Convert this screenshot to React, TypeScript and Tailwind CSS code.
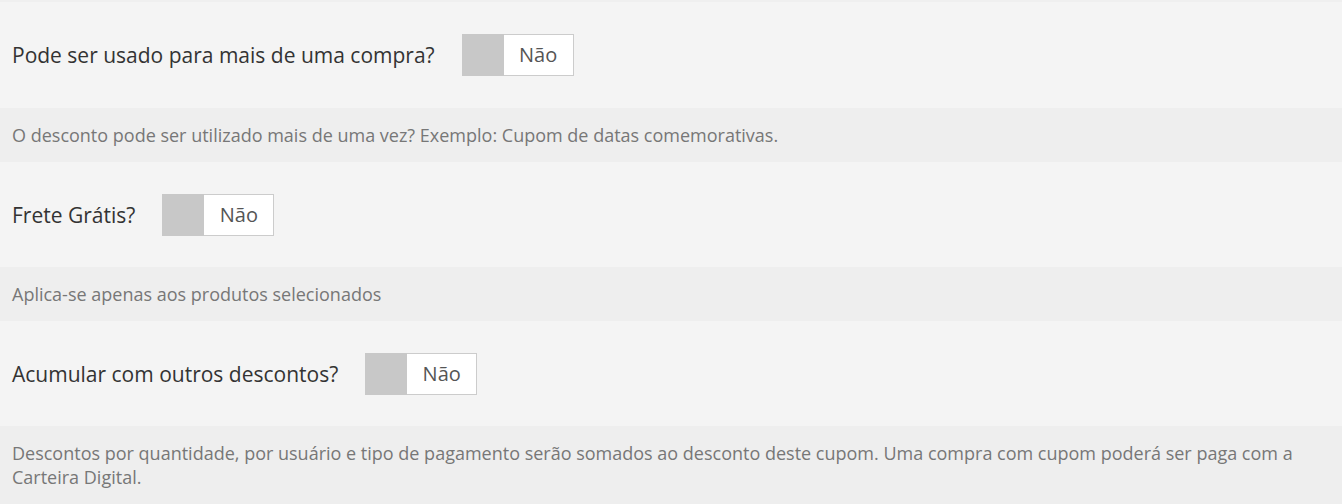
import React from "react";

function Toggle() {
  return (
    <div className="flex h-[42px] w-[112px] shrink-0">
      <div className="w-[42px] bg-[#c8c8c8]" />
      <div className="flex flex-1 items-center justify-center border border-l-0 border-[#cccccc] bg-white text-[20px] text-[#555555]">
        Não
      </div>
    </div>
  );
}

function Row({ label, help, h }: { label: string; help: React.ReactNode; h: string }) {
  return (
    <>
      <div className={`flex items-center gap-[27px] bg-[#f4f4f4] px-3 ${h}`}>
        <span className="text-[21px] leading-[28px] text-[#333333]">{label}</span>
        <Toggle />
      </div>
      <div className="bg-[#eeeeee] px-3 py-[15px] text-[18px] leading-[24px] text-[#777777]">{help}</div>
    </>
  );
}

export default function App() {
  return (
    <div className="w-[1342px] h-[504px] overflow-hidden bg-[#eeeeee]" style={{ fontFamily: '"Open Sans", sans-serif' }}>
      <div className="h-[2px] bg-[#efefef]" />
      <Row
        h="h-[106px]"
        label="Pode ser usado para mais de uma compra?"
        help="O desconto pode ser utilizado mais de uma vez? Exemplo: Cupom de datas comemorativas."
      />
      <Row h="h-[105px]" label="Frete Grátis?" help="Aplica-se apenas aos produtos selecionados" />
      <Row
        h="h-[105px]"
        label="Acumular com outros descontos?"
        help="Descontos por quantidade, por usuário e tipo de pagamento serão somados ao desconto deste cupom. Uma compra com cupom poderá ser paga com a Carteira Digital."
      />
    </div>
  );
}
